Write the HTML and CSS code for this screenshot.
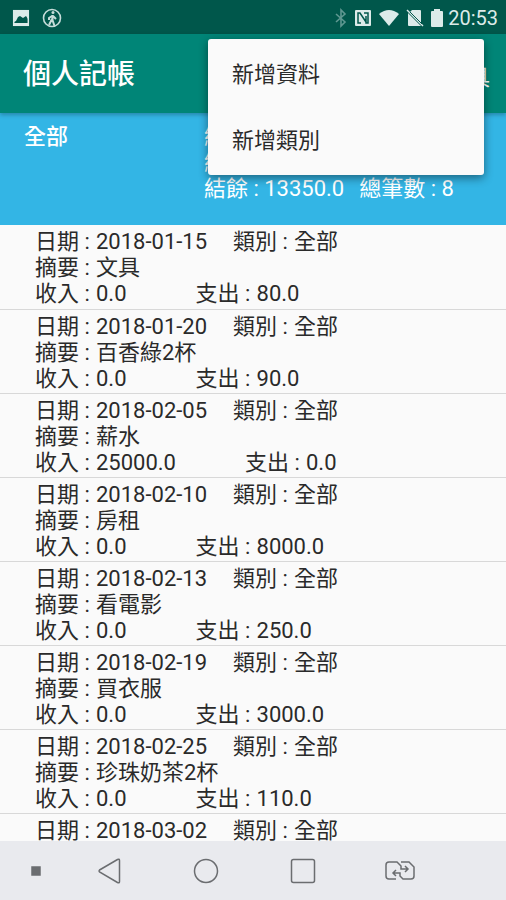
FILE: index.html
```
<!DOCTYPE html>
<html lang="zh-Hant">
<head>
    <meta charset="UTF-8">
    <meta name="viewport" content="width=device-width, initial-scale=1.0">
    <title>個人記帳</title>
    <link rel="stylesheet" href="styles.css">
</head>
<body>
    <div class="statusbar">
        <svg width="18" height="18" viewBox="0 0 18 18"><rect x="1.700" y="1.700" width="14.600" height="14.600" fill="none" stroke="#dcebe9" stroke-width="1.500"/><path fill="#dcebe9" d="M2 2h14v8l-2-3-3 2-3-2-2 1-2 4-2 1zM2 14h14v2H2z"/></svg>
        <svg width="20" height="20" viewBox="0 0 20 20" fill="none" stroke="#c5dcd9" stroke-width="1.6"><circle cx="10" cy="10" r="8.5"/><circle cx="11" cy="4.500" r="1.500" fill="#c5dcd9" stroke="none"/><path d="M10.500 7v5l2 6M10 11l-3 6M11 8l3 3M10 8l-3 2v2" stroke-width="2"/></svg>
        <div class="system">
            <svg width="12" height="20" viewBox="0 0 12 20" fill="none" stroke="#5f9891" stroke-width="1.6"><path d="M1 6l9 8-4 4V2l4 4-9 8"/></svg>
            <svg width="18" height="18" viewBox="0 0 18 18"><rect x="1" y="1" width="16" height="16" rx="1" fill="#dcebe9"/><path d="M7 14H4V4h2l6 9M10 4h4v10h-2V7" fill="none" stroke="#00574b" stroke-width="1.500"/></svg>
            <svg width="20" height="18" viewBox="0 0 20 18"><path d="M0 5Q10-3 20 5L10 17z" fill="#dcebe9"/></svg>
            <svg width="18" height="18" viewBox="0 0 18 18"><path d="M6 1h8q1 0 1 1v12L4 3zM2 4l13 13H3q-1 0-1-1z" fill="#dcebe9"/><path d="M1 1l16 16" stroke="#dcebe9" stroke-width="1.500"/><path d="M4 3l12 12" stroke="#00574b" stroke-width="1"/></svg>
            <svg width="12" height="18" viewBox="0 0 12 18"><path d="M0 3q0-1 1-1h2V0h6v2h2q1 0 1 1v14q0 1-1 1H1q-1 0-1-1z" fill="#dcebe9"/></svg>
            <span class="time">20:53</span>
        </div>
    </div>

    <header class="toolbar">
        <h1>個人記帳</h1>
        <button class="tools">工具</button>
        <div class="menu">
            <button>新增資料</button>
            <button>新增類別</button>
        </div>
    </header>

    <section class="summary">
        <p>全部</p>
        <div class="totals">
            <p>總收入 : 25000.0</p>
            <p>總支出 : 11650.0</p>
            <p><span>結餘 : 13350.0</span><span>總筆數 : 8</span></p>
        </div>
    </section>

    <ul class="records">
        <li>
            <p><span class="label">日期 :</span><span class="date">2018-01-15</span><span class="label">類別 :</span>全部</p>
            <p><span class="label">摘要 :</span>文具</p>
            <p><span class="label">收入 :</span><span class="income">0.0</span><span class="label">支出 :</span>80.0</p>
        </li>
        <li>
            <p><span class="label">日期 :</span><span class="date">2018-01-20</span><span class="label">類別 :</span>全部</p>
            <p><span class="label">摘要 :</span>百香綠2杯</p>
            <p><span class="label">收入 :</span><span class="income">0.0</span><span class="label">支出 :</span>90.0</p>
        </li>
        <li>
            <p><span class="label">日期 :</span><span class="date">2018-02-05</span><span class="label">類別 :</span>全部</p>
            <p><span class="label">摘要 :</span>薪水</p>
            <p><span class="label">收入 :</span><span class="income">25000.0</span><span class="label">支出 :</span>0.0</p>
        </li>
        <li>
            <p><span class="label">日期 :</span><span class="date">2018-02-10</span><span class="label">類別 :</span>全部</p>
            <p><span class="label">摘要 :</span>房租</p>
            <p><span class="label">收入 :</span><span class="income">0.0</span><span class="label">支出 :</span>8000.0</p>
        </li>
        <li>
            <p><span class="label">日期 :</span><span class="date">2018-02-13</span><span class="label">類別 :</span>全部</p>
            <p><span class="label">摘要 :</span>看電影</p>
            <p><span class="label">收入 :</span><span class="income">0.0</span><span class="label">支出 :</span>250.0</p>
        </li>
        <li>
            <p><span class="label">日期 :</span><span class="date">2018-02-19</span><span class="label">類別 :</span>全部</p>
            <p><span class="label">摘要 :</span>買衣服</p>
            <p><span class="label">收入 :</span><span class="income">0.0</span><span class="label">支出 :</span>3000.0</p>
        </li>
        <li>
            <p><span class="label">日期 :</span><span class="date">2018-02-25</span><span class="label">類別 :</span>全部</p>
            <p><span class="label">摘要 :</span>珍珠奶茶2杯</p>
            <p><span class="label">收入 :</span><span class="income">0.0</span><span class="label">支出 :</span>110.0</p>
        </li>
        <li>
            <p><span class="label">日期 :</span><span class="date">2018-03-02</span><span class="label">類別 :</span>全部</p>
        </li>
    </ul>

    <nav class="navbar">
        <button class="dot" aria-label="隱藏"><svg width="10" height="10" viewBox="0 0 10 10"><rect x="1" y="1" width="8" height="8" fill="#6b6d70"/></svg></button>
        <button aria-label="返回"><svg width="26" height="28" viewBox="0 0 26 28"><path d="M3.500 13L21.500 2.500q2-1 2 1v21q0 2-2 1L3.500 15q-1-1 0-2z"/></svg></button>
        <button aria-label="主畫面"><svg width="28" height="28" viewBox="0 0 28 28"><circle cx="14" cy="14" r="11.500"/></svg></button>
        <button aria-label="最近"><svg width="28" height="28" viewBox="0 0 28 28"><rect x="2.500" y="2.500" width="23" height="23" rx="2"/></svg></button>
        <button aria-label="切換"><svg width="32" height="22" viewBox="0 0 32 22"><path d="M12 19H5q-3 0-3-3V5q0-3 3-3h8l4 4v3h7M21 6l3 3-3 3M17 2h8l5 5v9q0 3-3 3h-8l-3-3v-3H9M12 10l-3 3 3 3"/></svg></button>
    </nav>
</body>
</html>
```
FILE: styles.css
```
*{
    margin: 0;
    padding: 0;
    box-sizing: border-box;
    font-family: Roboto, "Noto Sans CJK TC", sans-serif;
}

body{
    display: flex;
    flex-direction: column;
    height: 100vh;
    overflow: hidden;
    background-color: #fafafa;
    color: #2a2a2a;
    font-size: 22px;
    line-height: 26px;
}

button{
    border: none;
    background: none;
    color: inherit;
    font-size: 22px;
    cursor: pointer;
}

svg{
    display: block;
}

.statusbar{
    display: flex;
    align-items: center;
    gap: 12px;
    flex-shrink: 0;
    height: 34px;
    padding: 2px 8px 0 12px;
    background-color: #00574b;
}

.system{
    display: flex;
    align-items: center;
    gap: 7px;
    margin-left: auto;
}

.time{
    margin-left: -2px;
    color: #dcebe9;
    font-size: 20px;
}

.toolbar{
    position: relative;
    z-index: 1;
    display: flex;
    align-items: center;
    justify-content: space-between;
    flex-shrink: 0;
    height: 79px;
    padding: 3px 16px 0 23px;
    background-color: #008577;
    color: #fff;
    box-shadow: 0 2px 4px rgba(0,0,0,0.25);
}

h1{
    font-size: 28px;
    font-weight: 500;
}

.menu{
    position: absolute;
    top: 5px;
    right: 22px;
    display: flex;
    flex-direction: column;
    width: 276px;
    padding-bottom: 4px;
    background-color: #fafafa;
    color: #2a2a2a;
    border-radius: 3px;
    box-shadow: 0 3px 10px rgba(0,0,0,0.45);
}

.menu button{
    height: 66px;
    padding: 0 24px;
    text-align: left;
}

.summary{
    display: flex;
    flex-shrink: 0;
    height: 112px;
    padding: 11px 24px;
    background-color: #33b5e5;
    color: #fff;
}

.summary > p{
    flex: 0 0 180px;
    font-weight: 500;
}

.totals span{
    margin-right: 15px;
}

.records{
    flex: 1;
    overflow: hidden;
    list-style: none;
}

.records li{
    padding: 4px 35px 1px;
    border-bottom: 1px solid #d8d8d8;
}

.records li:first-child{
    padding-bottom: 2px;
}

.records p{
    display: flex;
}

.label{
    min-width: 61px;
}

.date{
    min-width: 137px;
}

.income{
    margin-right: 69px;
}

.navbar{
    display: flex;
    align-items: center;
    flex-shrink: 0;
    height: 59px;
    padding: 0 57px 0 24px;
    background-color: #e9eaee;
}

.navbar button{
    display: flex;
    flex: 1;
    justify-content: center;
}

.navbar .dot{
    flex: 0 0 24px;
    margin-right: 12px;
}

.navbar svg{
    fill: none;
    stroke: #6b6d70;
    stroke-width: 1.5;
}
```
